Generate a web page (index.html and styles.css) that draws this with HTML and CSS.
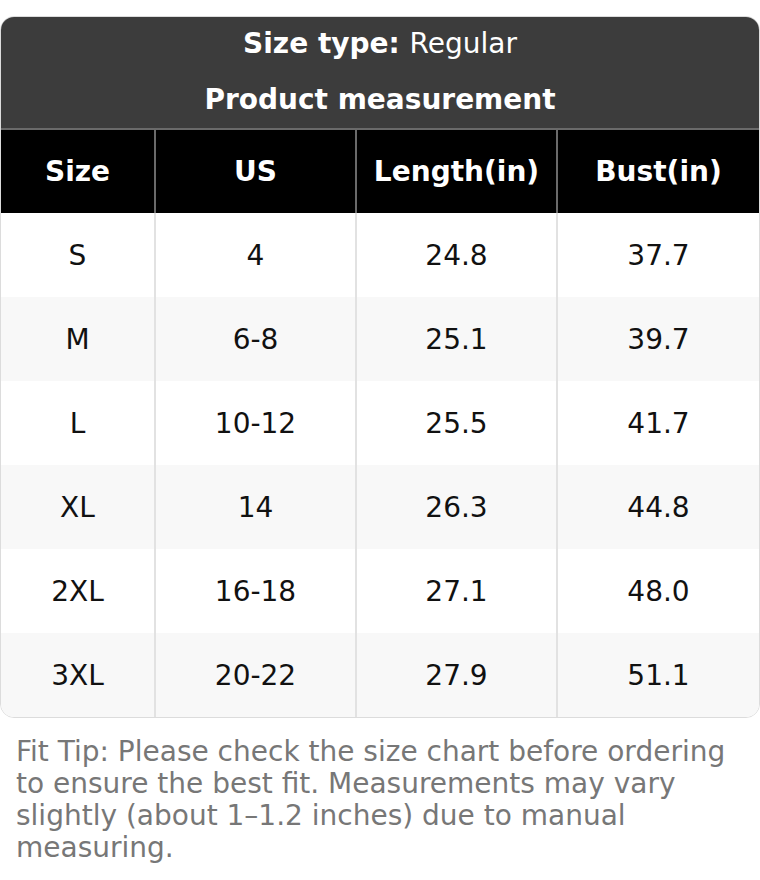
FILE: index.html
```html
<!DOCTYPE html>
<html>
<head>
<meta charset="utf-8">
<link rel="stylesheet" href="styles.css">
</head>
<body>
<div class="page">
  <div class="card">
    <table class="chart">
      <colgroup>
        <col class="c1"><col class="c2"><col class="c3"><col class="c4">
      </colgroup>
      <thead>
        <tr class="meta meta1"><th colspan="4"><b>Size type:</b> <span class="reg">Regular</span></th></tr>
        <tr class="meta meta2"><th colspan="4">Product measurement</th></tr>
        <tr class="cols">
          <th>Size</th><th>US</th><th>Length(in)</th><th>Bust(in)</th>
        </tr>
      </thead>
      <tbody>
        <tr><td>S</td><td>4</td><td>24.8</td><td>37.7</td></tr>
        <tr><td>M</td><td>6-8</td><td>25.1</td><td>39.7</td></tr>
        <tr><td>L</td><td>10-12</td><td>25.5</td><td>41.7</td></tr>
        <tr><td>XL</td><td>14</td><td>26.3</td><td>44.8</td></tr>
        <tr><td>2XL</td><td>16-18</td><td>27.1</td><td>48.0</td></tr>
        <tr><td>3XL</td><td>20-22</td><td>27.9</td><td>51.1</td></tr>
      </tbody>
    </table>
  </div>
  <p class="tip">Fit Tip: Please check the size chart before ordering to ensure the best fit. Measurements may vary slightly (about 1–1.2 inches) due to manual measuring.</p>
</div>
</body>
</html>
```

FILE: styles.css
```css
html, body {
  margin: 0;
  padding: 0;
  background: #fff;
}
body {
  font-family: "DejaVu Sans", sans-serif;
  font-size: 28px;
  color: #111;
}
.page {
  padding-top: 16px;
}
.card {
  border: 1px solid #dcdcdc;
  border-radius: 14px;
  overflow: hidden;
}
.chart {
  width: 100%;
  border-collapse: collapse;
  table-layout: fixed;
}
.c1 { width: 154px; }
.c2 { width: 201px; }
.c3 { width: 201px; }
.meta th {
  background: #3c3c3c;
  color: #fff;
  height: 56px;
  padding: 0;
  font-weight: bold;
  border: none;
  vertical-align: middle;
}
.meta1 th {
  padding-bottom: 4px;
  height: 52px;
}
.meta .reg {
  font-weight: normal;
}
.meta2 th {
  height: 53px;
  padding-bottom: 2px;
  border-bottom: 2px solid #6a6a6a;
}
.cols th {
  background: #000;
  color: #fff;
  height: 83px;
  padding: 0;
  font-weight: bold;
  border-left: 2px solid #6a6a6a;
}
.cols th:first-child {
  border-left: none;
}
tbody td {
  height: 84px;
  padding: 0;
  text-align: center;
  border-left: 2px solid #e2e2e2;
}
tbody td:first-child {
  border-left: none;
}
tbody tr:nth-child(even) td {
  background: #f8f8f8;
}
.tip {
  margin: 18px 0 0;
  padding: 0 16px;
  color: #777;
  line-height: 32px;
}
```
